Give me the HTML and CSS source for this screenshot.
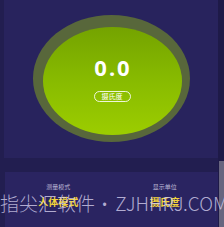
FILE: index.html
```html
<!DOCTYPE html>
<html>
<head>
<meta charset="utf-8">
<link rel="stylesheet" href="styles.css">
</head>
<body>
<div class="page">
  <div class="main">
    <section class="top">
      <div class="ring">
        <div class="dial">
          <div class="value">0.0</div>
          <div class="unit-pill">摄氏度</div>
        </div>
      </div>
    </section>
    <div class="divider"></div>
    <section class="bottom">
      <div class="col">
        <div class="label">测量模式</div>
        <div class="val">人体模式</div>
      </div>
      <div class="col">
        <div class="label">显示单位</div>
        <div class="val">摄氏度</div>
      </div>
    </section>
  </div>
  <div class="scroll"><div class="thumb"></div></div>
</div>
<div class="watermark">指尖汇软件<span class="dot">•</span>ZJHHRJ.COM</div>
</body>
</html>
```
FILE: styles.css
```css
html, body {
  margin: 0;
  padding: 0;
}
body {
  width: 224px;
  height: 227px;
  overflow: hidden;
  background: #221e50;
  font-family: "Noto Sans", "Noto Sans CJK SC", sans-serif;
  position: relative;
}
.page {
  display: flex;
  height: 227px;
}
.main {
  width: 214px;
  margin-left: 4px;
  display: flex;
  flex-direction: column;
}
.top {
  height: 158px;
  background: #28235d;
  display: flex;
  justify-content: center;
  padding-top: 15px;
  box-sizing: border-box;
}
.ring {
  width: 157px;
  height: 127px;
  border-radius: 50%;
  background: #58673b;
  box-sizing: border-box;
  padding: 12px 0 0 10px;
}
.dial {
  width: 139px;
  height: 108px;
  border-radius: 50%;
  background: linear-gradient(180deg, #74a300 0%, #88bb00 50%, #9ccd00 100%);
  display: flex;
  flex-direction: column;
  align-items: center;
  padding-top: 30px;
  box-sizing: border-box;
}
.value {
  color: #ffffff;
  font-weight: 700;
  font-size: 22px;
  line-height: 21px;
  letter-spacing: 2px;
  margin-right: -2px;
}
.unit-pill {
  margin-top: 13px;
  width: 37px;
  height: 11px;
  box-sizing: border-box;
  border: 1px solid rgba(255, 255, 255, 0.85);
  border-radius: 6px;
  color: #ffffff;
  font-size: 7px;
  line-height: 9px;
  text-align: center;
}
.divider {
  height: 14px;
  background: #221e50;
}
.bottom {
  flex: 1;
  margin-left: 1px;
  background: #2a2461;
  display: flex;
  padding-top: 11px;
  box-sizing: border-box;
}
.col {
  flex: 1;
  display: flex;
  flex-direction: column;
  align-items: center;
}
.label {
  color: #bdb9d6;
  font-size: 6px;
  line-height: 8px;
}
.val {
  margin-top: 5px;
  color: #f2d43a;
  font-weight: 700;
  font-size: 10px;
  line-height: 12px;
}
.scroll {
  flex: 1;
  background: #1e1a48;
  display: flex;
  flex-direction: column;
  justify-content: flex-end;
}
.thumb {
  height: 66px;
  margin-left: 1px;
  background: #67657f;
}
.watermark {
  position: absolute;
  left: 0;
  top: 193px;
  font-family: "Noto Sans CJK SC", "Noto Sans", sans-serif;
  font-weight: 300;
  font-size: 19px;
  line-height: 20px;
  color: rgba(215, 210, 240, 0.78);
  white-space: nowrap;
}
.dot {
  font-family: "Noto Sans", sans-serif;
  margin: 0 7px 0 6px;
}
```
